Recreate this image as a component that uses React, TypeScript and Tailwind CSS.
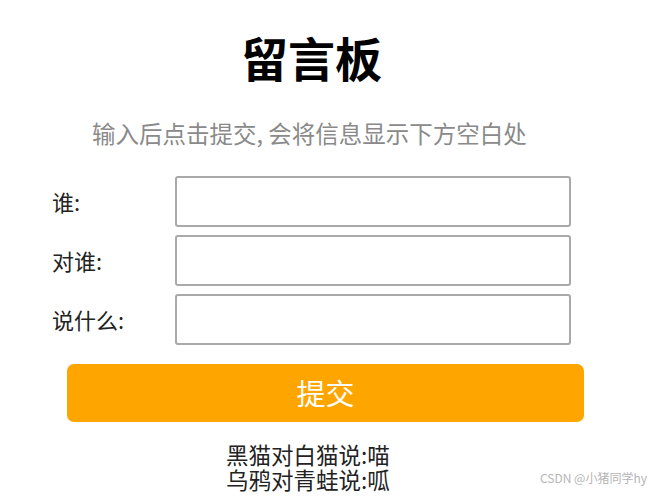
export default function App() {
  const fields = ['谁:', '对谁:', '说什么:'];
  const messages = ['黑猫对白猫说:喵', '乌鸦对青蛙说:呱'];

  return (
    <div
      className="relative w-[656px] h-[499px] bg-white overflow-hidden"
      style={{ fontFamily: '"Microsoft YaHei", "Noto Sans CJK SC", sans-serif' }}
    >
      {/* Title */}
      <h1 className="pt-[26px] pl-[241px] text-[47px] leading-[62px] font-bold text-black">
        留言板
      </h1>

      {/* Hint */}
      <p className="mt-[30px] pl-[92px] text-[23.5px] leading-[30px] text-[#8a8a8a]">
        输入后点击提交, 会将信息显示下方空白处
      </p>

      {/* Form */}
      <div className="mt-[28px] flex flex-col gap-[8px] pl-[52px]">
        {fields.map((f) => (
          <div key={f} className="flex items-center h-[51px]">
            <label className="w-[123px] text-[22px] text-[#222]">{f}</label>
            <input className="w-[396px] h-[51px] border-2 border-[#a9a9a9] rounded-[3px] outline-none" />
          </div>
        ))}
      </div>

      <button className="block mt-[19px] ml-[67px] w-[517px] h-[58px] bg-[#ffa500] rounded-[7px] text-white text-[29px]">
        提交
      </button>

      {/* Messages */}
      <div className="mt-[20px] pl-[226px] text-[22.5px] leading-[25px] text-[#222]">
        {messages.map((m) => (
          <div key={m}>{m}</div>
        ))}
      </div>

      <span className="absolute left-[540px] top-[469px] text-[12px] text-[#b5b5b5]">
        CSDN @小猪同学hy
      </span>
    </div>
  );
}
